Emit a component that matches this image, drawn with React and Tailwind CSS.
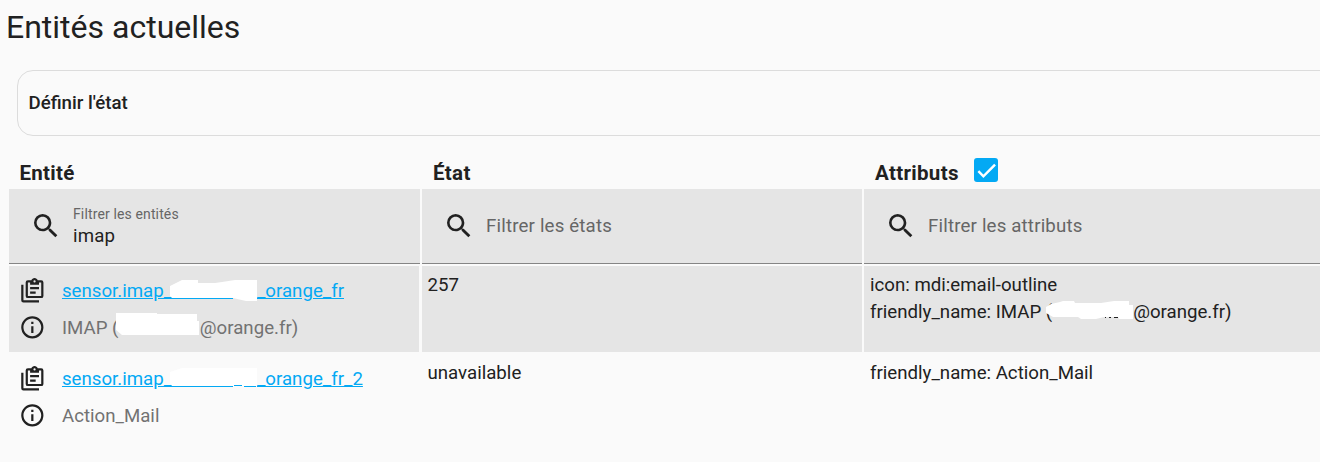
const MAGNIFY =
  'M9.5,3A6.5,6.5 0 0,1 16,9.5C16,11.11 15.41,12.59 14.44,13.73L14.71,14H15.5L20.5,19L19,20.5L14,15.5V14.71L13.73,14.44C12.59,15.41 11.11,16 9.5,16A6.5,6.5 0 0,1 3,9.5A6.5,6.5 0 0,1 9.5,3M9.5,5C7,5 5,7 5,9.5C5,12 7,14 9.5,14C12,14 14,12 14,9.5C14,7 12,5 9.5,5Z'
const INFO =
  'M11,9H13V7H11M12,20C7.59,20 4,16.41 4,12C4,7.59 7.59,4 12,4C16.41,4 20,7.59 20,12C20,16.41 16.41,20 12,20M12,2A10,10 0 0,0 2,12A10,10 0 0,0 12,22A10,10 0 0,0 22,12A10,10 0 0,0 12,2M11,17H13V11H11V17Z'
const CLIPBOARD =
  'M4,7V21H18V23H4A2,2 0 0,1 2,21V7H4M20,3A2,2 0 0,1 22,5V17A2,2 0 0,1 20,19H8A2,2 0 0,1 6,17V5A2,2 0 0,1 8,3H11.18C11.6,1.84 12.7,1 14,1C15.3,1 16.4,1.84 16.82,3H20M14,3A1,1 0 0,0 13,4A1,1 0 0,0 14,5A1,1 0 0,0 15,4A1,1 0 0,0 14,3M10,7V5H8V17H20V5H18V7H10M18,11H10V9H18V11M15,15H10V13H15V15Z'

function Icon({ path, className }) {
  return (
    <svg viewBox="0 0 24 24" fill="currentColor" className={`shrink-0 ${className}`}>
      <path d={path} />
    </svg>
  )
}

function Filter({ label, value }) {
  return (
    <div className="flex h-[75px] items-center border-b border-[#858585] bg-[#e5e5e5] pl-[21px]">
      <Icon path={MAGNIFY} className="size-8" />
      <div className="ml-[11px] tracking-[0.175px]">
        {value ? (
          <>
            <p className="text-[14px] leading-[18px] tracking-[0.131px] text-[#666]">{label}</p>
            <p className="-mb-px pt-px leading-[24px]">{value}</p>
          </>
        ) : (
          <p className="pt-px text-[#666]">{label}</p>
        )}
      </div>
    </div>
  )
}

// Hidden part of a name, painted over with a white marker
function Redacted({ className, path, line, marks }) {
  return (
    <span className={`relative inline-block h-[27px] shrink-0 ${className}`}>
      <svg className="absolute top-0 left-0 h-[27px] w-full overflow-visible">
        <path d={path} fill="#fff" />
        {line && <path d={line} stroke="#03a9f4" />}
        {marks && <path d={marks} stroke="#212121" />}
      </svg>
    </span>
  )
}

function EntityCell({ id, name, className = '' }) {
  return (
    <div className={`pt-[6px] pl-[10px] ${className}`}>
      <div className="flex h-[37px] items-center">
        <Icon path={CLIPBOARD} className="size-[26.67px]" />
        <a href="#" className="ml-4 flex pt-[2px] pl-[0.33px] whitespace-pre text-[#03a9f4] underline">
          {id}
        </a>
      </div>
      <div className="flex h-[37px] items-center">
        <Icon path={INFO} className="size-[26.67px]" />
        <span className="ml-4 flex pt-[2px] pl-[0.33px] whitespace-pre text-[#727272]">{name}</span>
      </div>
    </div>
  )
}

export default function App() {
  return (
    <div className="h-[462px] w-[1320px] overflow-hidden bg-[#fafafa] font-['Roboto',sans-serif] text-[18.67px] leading-[27px] text-[#212121]">
      <h1 className="h-[70px] pt-[7px] pl-[6px] text-[32px] leading-[40px]">Entités actuelles</h1>

      <div className="-mr-5 ml-[17px] flex h-[66px] items-center rounded-[16px] border border-[#dcdcdc] pl-[10.5px] font-medium">
        Définir l'état
      </div>

      <div className="mt-[21px] ml-[9px] grid grid-cols-[410px_440px_1fr] text-[20.5px] font-bold tracking-[0.32px]">
        <div className="h-8 pt-[3px] pl-[10.4px]">Entité</div>
        <div className="h-8 pt-[3px] pl-[14px]">État</div>
        <div className="flex h-8 pl-4">
          <span className="w-[84px] pt-[3px]">Attributs</span>
          <span className="mt-px ml-[15px] flex size-6 items-center justify-center rounded-[3px] bg-[#03a9f4]">
            <svg viewBox="0 0 24 24" className="size-[19px]" fill="none" stroke="#fff" strokeWidth="3.12">
              <path d="M1.73,12.91 8.1,19.28 22.79,4.59" />
            </svg>
          </span>
        </div>
      </div>

      <div className="ml-[9px] grid grid-cols-[411px_440px_1fr] gap-x-[2px]">
        <Filter label="Filtrer les entités" value="imap" />
        <Filter label="Filtrer les états" />
        <Filter label="Filtrer les attributs" />
      </div>

      <div className="mt-[2px] ml-[9px] grid h-[86px] grid-cols-[410px_440px_1fr] gap-x-[3px]">
        <EntityCell
          className="bg-[#e5e5e5]"
          id={
            <>
              sensor.imap_
              <Redacted
                className="w-[84.8px]"
                line="M0,20.5H61"
                path="M-2,8L4,5L10,2H26V5H43L50,4L63,2H85V23H74L61,20H0L-2,18Z"
              />
              _orange_fr
            </>
          }
          name={
            <>
              IMAP (
              <Redacted className="w-[81.4px]" path="M-2,-2H39V-1H79V6H81V20H4L-2,15Z" />
              @orange.fr)
            </>
          }
        />
        <div className="bg-[#e5e5e5] pt-[6px] pl-[5.5px]">257</div>
        <div className="-ml-px bg-[#e5e5e5] pt-[6px] pl-[6px]">
          <p>icon: mdi:email-outline</p>
          <p className="flex whitespace-pre">
            friendly_name: IMAP (
            <Redacted
              className="w-[81px]"
              path="M-6,8L-1,5L8,3L11,2H22L23,4H49L62,2H77V6H81V20H67L66,18H52L44,20H29L26,18H1L-6,14Z"
              marks="M53,18.5H54M57,18.5H59M62,18.5H66"
            />
            @orange.fr)
          </p>
        </div>
      </div>

      <div className="mt-[2px] ml-[9px] grid h-[88px] grid-cols-[410px_440px_1fr] gap-x-[3px]">
        <EntityCell
          id={
            <>
              sensor.imap_
              <Redacted
                className="w-[84.8px]"
                line="M0,20.5H61M62,19.5H70M72,20.5H84"
                path="M-2,6L10,2H85V20H0L-2,17Z"
              />
              _orange_fr_2
            </>
          }
          name="Action_Mail"
        />
        <div className="pt-[6px] pl-[5.5px]">unavailable</div>
        <div className="-ml-px pt-[6px] pl-[6px]">friendly_name: Action_Mail</div>
      </div>
    </div>
  )
}
